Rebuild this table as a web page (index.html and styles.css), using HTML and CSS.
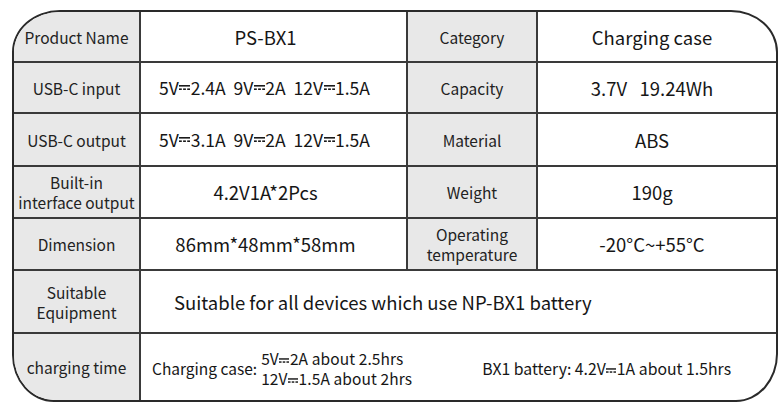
FILE: index.html
```html
<!DOCTYPE html>
<html lang="en">
<head>
<meta charset="utf-8">
<title>PS-BX1 specifications</title>
<link rel="stylesheet" href="styles.css">
</head>
<body>
<div class="spec">
  <div class="cell label">Product Name</div>
  <div class="cell value v2">PS-BX1</div>
  <div class="cell label">Category</div>
  <div class="cell value v4 last">Charging case</div>

  <div class="cell label">USB-C input</div>
  <div class="cell value v2 usb">5V<svg class="dc" viewBox="0 0 11 5"><rect x="0" y="0" width="11" height="1.6"/><rect x="0" y="3.4" width="2.8" height="1.6"/><rect x="4.1" y="3.4" width="2.8" height="1.6"/><rect x="8.2" y="3.4" width="2.8" height="1.6"/></svg>2.4A&nbsp; 9V<svg class="dc" viewBox="0 0 11 5"><rect x="0" y="0" width="11" height="1.6"/><rect x="0" y="3.4" width="2.8" height="1.6"/><rect x="4.1" y="3.4" width="2.8" height="1.6"/><rect x="8.2" y="3.4" width="2.8" height="1.6"/></svg>2A&nbsp; 12V<svg class="dc" viewBox="0 0 11 5"><rect x="0" y="0" width="11" height="1.6"/><rect x="0" y="3.4" width="2.8" height="1.6"/><rect x="4.1" y="3.4" width="2.8" height="1.6"/><rect x="8.2" y="3.4" width="2.8" height="1.6"/></svg>1.5A</div>
  <div class="cell label">Capacity</div>
  <div class="cell value v4 last">3.7V&nbsp;&nbsp; 19.24Wh</div>

  <div class="cell label">USB-C output</div>
  <div class="cell value v2 usb">5V<svg class="dc" viewBox="0 0 11 5"><rect x="0" y="0" width="11" height="1.6"/><rect x="0" y="3.4" width="2.8" height="1.6"/><rect x="4.1" y="3.4" width="2.8" height="1.6"/><rect x="8.2" y="3.4" width="2.8" height="1.6"/></svg>3.1A&nbsp; 9V<svg class="dc" viewBox="0 0 11 5"><rect x="0" y="0" width="11" height="1.6"/><rect x="0" y="3.4" width="2.8" height="1.6"/><rect x="4.1" y="3.4" width="2.8" height="1.6"/><rect x="8.2" y="3.4" width="2.8" height="1.6"/></svg>2A&nbsp; 12V<svg class="dc" viewBox="0 0 11 5"><rect x="0" y="0" width="11" height="1.6"/><rect x="0" y="3.4" width="2.8" height="1.6"/><rect x="4.1" y="3.4" width="2.8" height="1.6"/><rect x="8.2" y="3.4" width="2.8" height="1.6"/></svg>1.5A</div>
  <div class="cell label">Material</div>
  <div class="cell value v4 last">ABS</div>

  <div class="cell label">Built-in<br>interface output</div>
  <div class="cell value v2">4.2V1A*2Pcs</div>
  <div class="cell label">Weight</div>
  <div class="cell value v4 last">190g</div>

  <div class="cell label">Dimension</div>
  <div class="cell value v2">86mm*48mm*58mm</div>
  <div class="cell label">Operating<br>temperature</div>
  <div class="cell value v4 last">-20°C~+55°C</div>

  <div class="cell label">Suitable<br>Equipment</div>
  <div class="cell value wide last">Suitable for all devices which use NP-BX1 battery</div>

  <div class="cell label bottom">charging time</div>
  <div class="cell charge last bottom">
    <span class="ch-title">Charging case:</span>
    <span class="ch-lines">
      <span class="ch-line">5V<svg class="dc small" viewBox="0 0 11 5"><rect x="0" y="0" width="11" height="1.6"/><rect x="0" y="3.4" width="2.8" height="1.6"/><rect x="4.1" y="3.4" width="2.8" height="1.6"/><rect x="8.2" y="3.4" width="2.8" height="1.6"/></svg>2A about 2.5hrs</span>
      <span class="ch-line">12V<svg class="dc small" viewBox="0 0 11 5"><rect x="0" y="0" width="11" height="1.6"/><rect x="0" y="3.4" width="2.8" height="1.6"/><rect x="4.1" y="3.4" width="2.8" height="1.6"/><rect x="8.2" y="3.4" width="2.8" height="1.6"/></svg>1.5A about 2hrs</span>
    </span>
    <span class="ch-battery">BX1 battery: 4.2V<svg class="dc small" viewBox="0 0 11 5"><rect x="0" y="0" width="11" height="1.6"/><rect x="0" y="3.4" width="2.8" height="1.6"/><rect x="4.1" y="3.4" width="2.8" height="1.6"/><rect x="8.2" y="3.4" width="2.8" height="1.6"/></svg>1A about 1.5hrs</span>
  </div>
</div>
</body>
</html>
```

FILE: styles.css
```css
html, body {
  margin: 0;
  padding: 0;
  background: #ffffff;
}

body {
  padding: 10px 0 0 12px;
  font-family: "Noto Sans CJK SC", "Noto Sans", sans-serif;
  color: #1a1a1a;
}

.spec {
  width: 762px;
  height: 388px;
  border: 2px solid #2a2a2a;
  border-radius: 48px 47px 42px 42px / 42px 42px 48px 47px;
  overflow: hidden;
  display: grid;
  grid-template-columns: 127px 267px 130px 238px;
  grid-template-rows: 51px 51px 53px 52px 52px 63px 66px;
  background: #ffffff;
}

.cell {
  display: flex;
  align-items: center;
  justify-content: center;
  text-align: center;
  border-right: 2px solid #3a3a3a;
  border-bottom: 2px solid #3a3a3a;
  box-sizing: border-box;
  min-width: 0;
}

.cell.last {
  border-right: none;
}

.cell.bottom {
  border-bottom: none;
}

.label {
  background: #e8e8e8;
  font-size: 15.5px;
  line-height: 20px;
  color: #222222;
}

.value {
  font-size: 18.5px;
  line-height: 22px;
  color: #161616;
  white-space: nowrap;
}

.v2 {
  padding-right: 16px;
}

.v2.usb {
  font-size: 17.5px;
  padding-right: 18px;
}

.v4 {
  padding-right: 10px;
}

.wide {
  grid-column: 2 / 5;
  justify-content: flex-start;
  padding-left: 33px;
}

.dc {
  display: inline-block;
  width: 11px;
  height: 5px;
  margin: 0 0.5px;
  vertical-align: 2px;
  fill: #1a1a1a;
}

.dc.small {
  width: 10px;
  height: 5px;
  vertical-align: 2px;
}

.charge {
  grid-column: 2 / 5;
  justify-content: flex-start;
  padding-left: 11px;
  font-size: 15.5px;
  color: #161616;
  white-space: nowrap;
}

.ch-title {
  margin-right: 4px;
  padding-top: 2px;
}

.ch-lines {
  display: flex;
  flex-direction: column;
  align-items: flex-start;
  text-align: left;
  line-height: 20.5px;
  font-size: 15.5px;
  letter-spacing: 0.1px;
  padding-top: 2px;
}

.ch-battery {
  margin-left: 70px;
  font-size: 15.8px;
  padding-top: 3px;
}
```
